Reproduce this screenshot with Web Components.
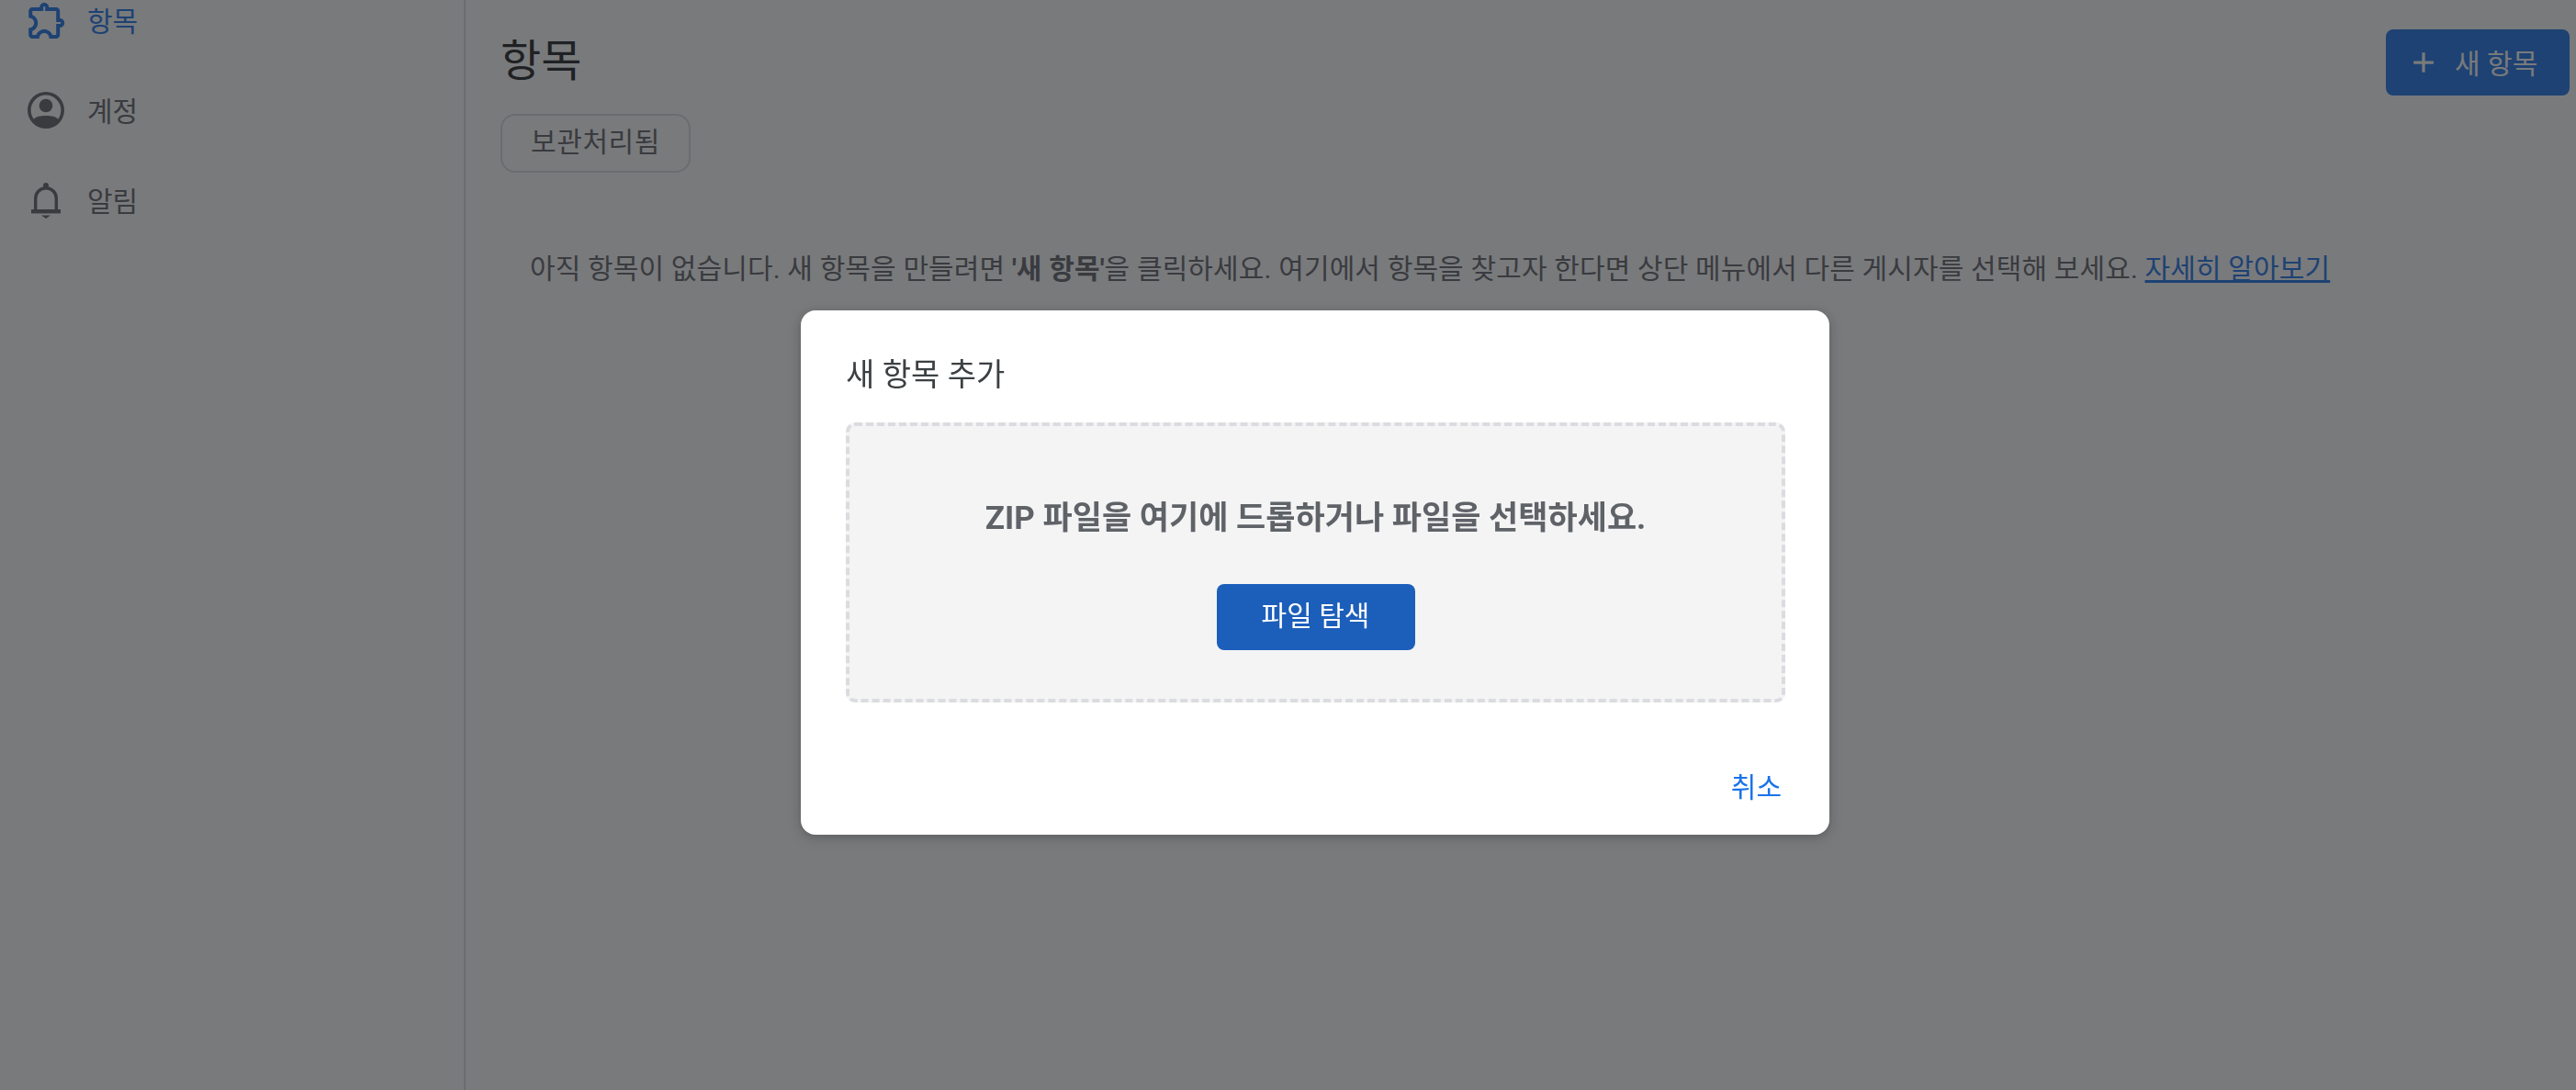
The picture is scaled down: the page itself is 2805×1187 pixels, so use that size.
<!DOCTYPE html>
<html lang="ko"><head><meta charset="utf-8"><title>항목</title>
<style>
html,body{margin:0;height:100%;overflow:hidden;background:#fff}
body{font-family:Roboto,"Noto Sans CJK KR",sans-serif;color:#3c4043}
</style></head><body>
<dash-app>
  <side-nav slot="nav">
    <nav-item active label="항목" icon="puzzle"></nav-item>
    <nav-item label="계정" icon="user"></nav-item>
    <nav-item label="알림" icon="bell"></nav-item>
  </side-nav>
  <items-page slot="main"></items-page>
</dash-app>
<modal-scrim>
  <add-dialog></add-dialog>
</modal-scrim>
<script>
const el=(name,html)=>{customElements.define(name,class extends HTMLElement{constructor(){super();this.attachShadow({mode:'open'}).innerHTML=typeof html==='function'?html(this):html}})};
el('dash-app',`<style>:host{display:flex;height:1187px;overflow:hidden}
.n{width:505px;border-right:2px solid #dadce0;box-sizing:content-box;flex:none}.m{flex:1;min-width:0}</style>
<div class="n"><slot name="nav"></slot></div><div class="m"><slot name="main"></slot></div>`);
el('side-nav',`<style>:host{display:flex;flex-direction:column;margin-top:-27px}</style><slot></slot>`);
const icons={
puzzle:`<path d="M10.5 4.5c.28 0 .5.22.5.5v2h6v6h2c.28 0 .5.22.5.5s-.22.5-.5.5h-2v6h-2.12c-.68-1.75-2.39-3-4.38-3s-3.7 1.25-4.38 3H4v-2.12c1.75-.68 3-2.39 3-4.38 0-1.99-1.24-3.7-2.99-4.38L4 7h6V5c0-.28.22-.5.5-.5m0-2C9.12 2.5 8 3.62 8 5H4c-1.1 0-1.99.9-1.99 2v3.8h.29c1.49 0 2.7 1.21 2.7 2.7s-1.21 2.7-2.7 2.7H2V20c0 1.1.9 2 2 2h3.8v-.3c0-1.49 1.21-2.7 2.7-2.7s2.7 1.21 2.7 2.7v.3H17c1.1 0 2-.9 2-2v-4c1.38 0 2.5-1.12 2.5-2.5S20.38 11 19 11V7c0-1.1-.9-2-2-2h-4c0-1.38-1.12-2.5-2.5-2.5z" transform="translate(.6 0)"/>`,
user:`<path fill-rule="evenodd" d="M12 2a10 10 0 1 0 0 20 10 10 0 0 0 0-20zm0 1.8a8.2 8.2 0 0 1 0 16.4 8.2 8.2 0 0 1 0-16.4z"/><circle cx="12" cy="9.5" r="3.65"/><path d="M5.2 17.2C6.6 15.3 9.1 15 12 15s5.400.3 6.800 2.200A8.800 8.800 0 0 1 12 21a8.800 8.800 0 0 1-6.800-3.800z"/>`,
bell:`<circle cx="12" cy="4" r="1.500"/><path d="M5.500 17.500V11a6.500 6.500 0 0 1 13 0v6.500h-1.700V11a4.800 4.800 0 0 0-9.600 0v6.500z"/><rect x="4" y="17" width="16" height="2.200"/><path d="M9.500 20.200h5L12 22z"/>`};
el('nav-item',h=>`<style>:host{display:flex;align-items:center;gap:21px;height:98px;padding-left:26px;font-size:30px;color:${h.hasAttribute('active')?'#1a73e8':'#5f6368'}}
svg{width:48px;height:48px;flex:none;fill:currentColor}span{padding-bottom:3px}</style><svg viewBox="0 0 24 24" aria-hidden="true">${icons[h.getAttribute('icon')]}</svg><span>${h.getAttribute('label')}</span>`);
el('items-page',`<style>:host{display:block;padding:0 7px 0 38px;color:#5f6368}
header{display:flex;justify-content:space-between;align-items:flex-start;padding-top:32px}
h1{margin:2px 0 0;font:400 48px/66px Roboto,"Noto Sans CJK KR",sans-serif;color:#202124}
.new{display:flex;align-items:center;gap:20px;height:72px;width:200px;box-sizing:border-box;padding-left:28px;background:#1a73e8;color:#fff;border-radius:8px;font-size:30px}
.new svg{width:26px;height:26px;fill:currentColor}
.new span{padding:0 0 3px 1px}
.chip{display:inline-block;height:64px;box-sizing:border-box;border:2px solid #dadce0;border-radius:16px;padding:0 31px;font-size:30px;line-height:57px;letter-spacing:.6px}
.row{margin-top:20px}
p{margin:83px 0 0 32px;font-size:30px;line-height:44px;white-space:nowrap;letter-spacing:.13px}
b{font-weight:700}a{color:#1a73e8;text-decoration:underline}</style>
<header><h1>항목</h1><div class="new"><svg viewBox="0 0 24 24"><path d="M10.500 2h3v8.500H22v3h-8.500V22h-3v-8.500H2v-3h8.500z"/></svg><span>새 항목</span></div></header>
<div class="row"><span class="chip">보관처리됨</span></div>
<p>아직 항목이 없습니다. 새 항목을 만들려면 <b>'새 항목'</b>을 클릭하세요. 여기에서 항목을 찾고자 한다면 상단 메뉴에서 다른 게시자를 선택해 보세요. <a href="#">자세히 알아보기</a></p>`);
el('modal-scrim',`<style>:host{position:fixed;inset:0;background:rgba(32,33,36,.6);display:block}</style><slot></slot>`);
el('add-dialog',`<style>:host{position:absolute;left:872px;top:338px;width:1120px;height:571px;box-sizing:border-box;background:#fff;border-radius:16px;padding:47px 50px 0 49px;display:flex;flex-direction:column;box-shadow:0 2px 8px rgba(32,33,36,.2),0 4px 16px rgba(32,33,36,.15);color:#5f6368}
h2{margin:0;font:400 34px/46px Roboto,"Noto Sans CJK KR",sans-serif;color:#3c4043}
.drop{margin-top:29px;height:305px;width:1023px;box-sizing:border-box;border:4px dashed #dadce0;border-radius:10px;background:#f4f4f5;display:flex;flex-direction:column;align-items:center;padding-top:77px}
.t{font-size:35px;line-height:48px;font-weight:700;color:#5f6368}
.btn{margin-top:47px;width:216px;height:72px;border-radius:8px;background:#1c5fba;color:#fff;font-size:30px;line-height:70px;text-align:center}
.f{display:flex;justify-content:flex-end;margin-top:72px;padding-right:2px;font-size:30px;line-height:42px;color:#1a73e8}</style>
<h2>새 항목 추가</h2>
<div class="drop"><div class="t">ZIP 파일을 여기에 드롭하거나 파일을 선택하세요.</div><div class="btn">파일 탐색</div></div>
<div class="f">취소</div>`);
</script>
</body></html>
